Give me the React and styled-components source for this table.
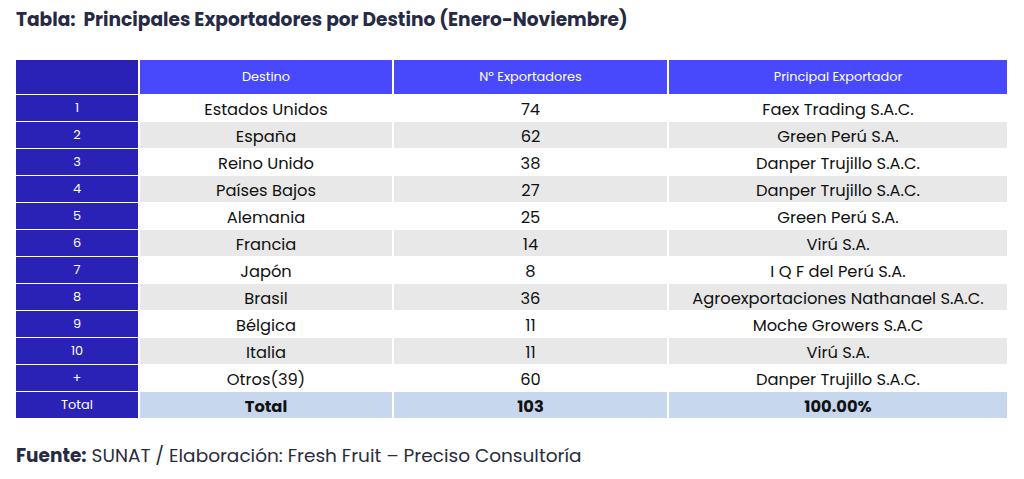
import React from 'react'
import styled, { createGlobalStyle } from 'styled-components'

const GlobalStyle = createGlobalStyle`
  html, body {
    margin: 0;
    padding: 0;
    background: #ffffff;
  }
  body {
    font-family: 'Poppins', 'Open Sans', 'Liberation Sans', sans-serif;
  }
`

const Page = styled.div`
  width: 1024px;
  height: 479px;
  box-sizing: border-box;
  padding: 8px 17px 0 16px;
`

const Title = styled.h1`
  margin: 0 0 28px;
  font-size: 18.6px;
  line-height: 24px;
  font-weight: 700;
  color: #262a45;
  white-space: pre;
`

const Table = styled.div`
  display: grid;
  grid-template-columns: 122px 252px 273px 1fr;
  grid-template-rows: 34px;
  grid-auto-rows: 26px;
  column-gap: 2px;
  row-gap: 1px;
`

const Cell = styled.div`
  display: flex;
  align-items: center;
  justify-content: center;
  box-sizing: border-box;
  padding-top: ${p => (p.head ? '0' : '3px')};
  font-size: ${p => (p.head ? '12.9px' : '16.3px')};
  font-weight: ${p => (p.bold ? 700 : 400)};
  color: ${p => (p.head ? '#ffffff' : '#111111')};
  background: ${p => p.bg};
  white-space: nowrap;
`

const IndexCell = styled(Cell)`
  padding-top: 0;
  background: #2a22b6;
  color: #ffffff;
  font-size: 12.9px;
  font-weight: 400;
`

const Footer = styled.p`
  margin: 26px 0 0;
  font-size: 18.5px;
  line-height: 24px;
  color: #2a2c3d;
`

const Strong = styled.strong`
  font-weight: 700;
  color: #262a45;
`

const ROWS = [
  ['1', 'Estados Unidos', '74', 'Faex Trading S.A.C.'],
  ['2', 'España', '62', 'Green Perú S.A.'],
  ['3', 'Reino Unido', '38', 'Danper Trujillo S.A.C.'],
  ['4', 'Países Bajos', '27', 'Danper Trujillo S.A.C.'],
  ['5', 'Alemania', '25', 'Green Perú S.A.'],
  ['6', 'Francia', '14', 'Virú S.A.'],
  ['7', 'Japón', '8', 'I Q F del Perú S.A.'],
  ['8', 'Brasil', '36', 'Agroexportaciones Nathanael S.A.C.'],
  ['9', 'Bélgica', '11', 'Moche Growers S.A.C'],
  ['10', 'Italia', '11', 'Virú S.A.'],
  ['+', 'Otros(39)', '60', 'Danper Trujillo S.A.C.']
]

const HEADERS = ['Destino', 'Nº Exportadores', 'Principal Exportador']

export default function App () {
  return (
    <Page>
      <GlobalStyle />
      <Title>{'Tabla:  Principales Exportadores por Destino (Enero-Noviembre)'}</Title>
      <Table>
        <IndexCell />
        {HEADERS.map(h => (
          <Cell key={h} head bg='#4848fc'>{h}</Cell>
        ))}
        {ROWS.map((r, i) => {
          const bg = i % 2 === 1 ? '#e8e8e8' : '#ffffff'
          return (
            <React.Fragment key={r[0]}>
              <IndexCell>{r[0]}</IndexCell>
              <Cell bg={bg}>{r[1]}</Cell>
              <Cell bg={bg}>{r[2]}</Cell>
              <Cell bg={bg}>{r[3]}</Cell>
            </React.Fragment>
          )
        })}
        <IndexCell>Total</IndexCell>
        <Cell bold bg='#c6d7ee'>Total</Cell>
        <Cell bold bg='#c6d7ee'>103</Cell>
        <Cell bold bg='#c6d7ee'>100.00%</Cell>
      </Table>
      <Footer>
        <Strong>Fuente:</Strong> SUNAT / Elaboración: Fresh Fruit – Preciso Consultoría
      </Footer>
    </Page>
  )
}
